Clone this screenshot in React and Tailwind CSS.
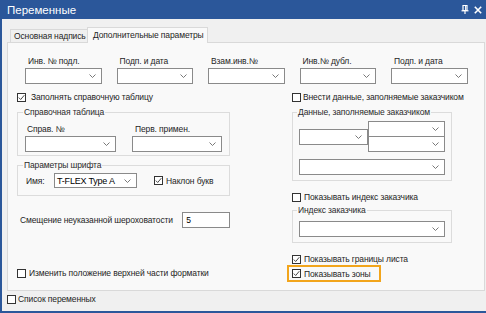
import React from "react";

const Chevron = () => (
  <svg width="7" height="4" viewBox="0 0 7 4" className="shrink-0">
    <path d="M0.5 0.5 L3.5 3.5 L6.5 0.5" fill="none" stroke="#6a6a6a" strokeWidth="0.9" />
  </svg>
);

const Combo = ({ className = "", text = "", textClass = "" }) => (
  <div className={`flex items-center justify-between bg-white border border-[#8a8a8a] pr-[5px] ${className}`}>
    <span className={`pl-[2px] whitespace-nowrap ${textClass}`}>{text}</span>
    <Chevron />
  </div>
);

const Check = ({ checked = false, label, gap = "ml-[3px]", className = "" }) => (
  <div className={`flex items-center h-[12px] ${className}`}>
    <div className="w-[9px] h-[9px] border border-[#333] bg-white flex items-center justify-center shrink-0">
      {checked && (
        <svg width="7" height="7" viewBox="0 0 7 7">
          <path d="M0.8 3.6 L2.7 5.5 L6.3 1.2" fill="none" stroke="#333" strokeWidth="0.9" />
        </svg>
      )}
    </div>
    <span className={`${gap} whitespace-nowrap`}>{label}</span>
  </div>
);

const Group = ({ legend, className = "", legendClass = "ml-[5px]", children }) => (
  <fieldset className={`border border-[#dcdcdc] min-w-0 ${className}`}>
    <legend className={`${legendClass} px-[1px] leading-[12px] text-[#2a2a2a]`}>{legend}</legend>
    {children}
  </fieldset>
);

export default function App() {
  const topLabels = ["Инв. № подл.", "Подп. и дата", "Взам.инв.№", "Инв.№ дубл.", "Подп. и дата"];
  return (
    <div className="w-[486px] h-[313px] bg-[#f0f0f0] flex flex-col overflow-hidden font-['Liberation_Sans',Arial,sans-serif] text-[8.5px] tracking-[-0.12px] leading-[12px] text-[#1e1e1e]">
      {/* Title bar */}
      <div className="h-[19px] shrink-0 bg-[#2b579a] flex items-center justify-between pl-[7px] pr-[4px] text-white">
        <span className="text-[11.5px] leading-[14px] tracking-normal">Переменные</span>
        <div className="flex items-center gap-[5px]">
          <svg width="8" height="9" viewBox="0 0 8 9">
            <path d="M2 0.5 H6 V5.5 H2 Z" fill="none" stroke="#fff" strokeWidth="1.2" />
            <path d="M0.5 5.8 H7.5" stroke="#fff" strokeWidth="1.2" />
            <path d="M4 6 V9" stroke="#fff" strokeWidth="1.2" />
            <path d="M4.6 1 V5" stroke="#fff" strokeWidth="1" />
          </svg>
          <svg width="8" height="8" viewBox="0 0 8 8">
            <path d="M0.8 0.8 L7.2 7.2 M7.2 0.8 L0.8 7.2" stroke="#fff" strokeWidth="1.6" />
          </svg>
        </div>
      </div>

      {/* Body */}
      <div className="flex-1 border-l-2 border-b-2 border-[#2b579a] flex flex-col pl-[5px] pr-[1px]">
        {/* Tabs */}
        <div className="flex items-end mt-[8px] pl-[3px] h-[15px]">
          <div className="w-[77px] h-[13px] border-l border-t border-[#d9d9d9] bg-[#f0f0f0] pl-[3px] flex items-center whitespace-nowrap overflow-hidden">
            Основная надпись
          </div>
          <div className="relative z-10 w-[121px] h-[16px] -mb-[1px] border-l border-t border-r border-[#d9d9d9] bg-[#f9f9f9] pl-[5px] pb-[2px] flex items-center whitespace-nowrap">
            Дополнительные параметры
          </div>
        </div>

        {/* Panel */}
        <div className="h-[249px] border border-[#d9d9d9] bg-[#f9f9f9] flex flex-col">
          {/* top row */}
          <div className="flex pl-[17px] gap-[15px] mt-[12px]">
            {topLabels.map((l, i) => (
              <div key={i} className="w-[76.5px] flex flex-col">
                <span className="pl-[3px] h-[12px] whitespace-nowrap">{l}</span>
                <Combo className="mt-[1px] h-[16px]" />
              </div>
            ))}
          </div>

          <div className="flex">
            {/* Left column */}
            <div className="ml-[9px] w-[213px] flex flex-col">
              <Check checked label="Заполнять справочную таблицу" gap="ml-[5px]" className="mt-[7px]" />
              <Group legend="Справочная таблица" className="mt-[3px] pb-[3px]">
                <div className="flex mt-[5px] pl-[7px] gap-[16px]">
                  <span className="w-[91px] pl-[2px]">Справ. №</span>
                  <span className="w-[90px] pl-[3px]">Перв. примен.</span>
                </div>
                <div className="flex mt-[1px] pl-[7px] gap-[16px]">
                  <Combo className="w-[91px] h-[16px]" />
                  <Combo className="w-[90px] h-[16px]" />
                </div>
              </Group>
              <Group legend="Параметры шрифта" className="mt-[3px] pb-[7px]">
                <div className="flex items-center mt-[2px] pl-[8px]">
                  <span className="w-[28px]">Имя:</span>
                  <Combo className="w-[83px] h-[15px]" text="T-FLEX Type A" textClass="text-[9px] tracking-[-0.2px] text-black" />
                  <Check checked label="Наклон букв" className="ml-[17px]" />
                </div>
              </Group>
              <div className="flex items-center mt-[16px] h-[16px]">
                <span className="w-[166px] pl-[3px] whitespace-nowrap">Смещение неуказанной шероховатости</span>
                <div className="w-[48px] h-[16px] bg-white border border-[#8a8a8a] pl-[3px] flex items-center text-black">5</div>
              </div>
              <Check label="Изменить положение верхней части форматки" className="mt-[39px]" />
            </div>

            {/* Right column */}
            <div className="ml-[62px] w-[160px] flex flex-col">
              <Check label="Внести данные, заполняемые заказчиком" gap="ml-[2px]" className="mt-[7px]" />
              <Group legend="Данные, заполняемые заказчиком" legendClass="ml-[4px]" className="mt-[3px] pb-[5px]">
                <div className="flex items-center mt-[3px] pl-[6px]">
                  <Combo className="w-[69px] h-[16px]" />
                  <div className="flex flex-col w-[77px]">
                    <Combo className="h-[16px]" />
                    <Combo className="h-[16px] -mt-[1px]" />
                  </div>
                </div>
                <Combo className="mt-[7px] ml-[6px] w-[146px] h-[16px]" />
              </Group>
              <Check label="Показывать индекс заказчика" className="mt-[10px]" />
              <Group legend="Индекс заказчика" legendClass="ml-[4px]" className="mt-[1px] pb-[5px]">
                <Combo className="mt-[5px] ml-[6px] w-[146px] h-[16px]" />
              </Group>
              <Check checked label="Показывать границы листа" className="mt-[10px]" />
              <div className="-ml-[5px] w-[94px] border-2 border-[#f2a51c] pl-[3px] flex items-center h-[17px]">
                <Check checked label="Показывать зоны" />
              </div>
            </div>
          </div>
        </div>

        <Check label="Список переменных" gap="ml-[2px]" className="mt-[2px]" />
      </div>
    </div>
  );
}
